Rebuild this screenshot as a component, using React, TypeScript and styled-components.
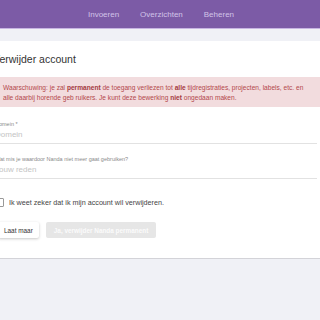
import styled, { createGlobalStyle } from "styled-components";

const Global = createGlobalStyle`
  html, body {
    margin: 0;
    padding: 0;
    background: #f0f1f6;
    font-family: "Liberation Sans", Arial, sans-serif;
    overflow: hidden;
  }
`

const Header = styled.header`
  height: 28px;
  background: #7c5ba6;
  border-bottom: 1px solid #c7b5e2;
  display: flex;
  align-items: center;
  justify-content: center;
  gap: 21px;
  padding-left: 2px;
`

const NavItem = styled.a`
  color: #d2c3e8;
  font-size: 8px;
  text-decoration: none;
`

const Card = styled.main`
  margin-top: 12px;
  background: #fff;
  border-bottom: 1px solid #d3d3d8;
  padding: 11px 0 20px;
`

const Content = styled.div`
  margin-left: -7px;
  display: flex;
  flex-direction: column;
`

const Title = styled.h1`
  margin: 0 0 11px;
  font-size: 10.5px;
  font-weight: 400;
  color: #333;
  line-height: 14px;
`

const Alert = styled.div`
  background: #f2dcde;
  color: #b2484c;
  font-size: 6.6px;
  line-height: 9.5px;
  padding: 6px 14px 5px 10px;
  width: 306px;

  b {
    font-weight: 700;
    color: #a43a3e;
  }
`

const Field = styled.div<{ $first?: boolean }>`
  display: flex;
  flex-direction: column;
  margin-left: 2px;
  width: 322px;
  border-bottom: 1px solid #e2e2e2;
  margin-top: ${({ $first }) => ($first ? "13px" : "11px")};
`

const Label = styled.label`
  font-size: 5.5px;
  color: #8a8a8a;
  line-height: 8px;
`

const Input = styled.input`
  border: none;
  outline: none;
  padding: 0 0 2px;
  font-family: inherit;
  font-size: 8px;
  line-height: 12px;
  height: 15px;
  box-sizing: border-box;
  color: #444;
  background: transparent;
  &::placeholder {
    color: #c4c4c4;
  }
`

const CheckRow = styled.label`
  display: flex;
  align-items: center;
  gap: 5px;
  height: 9px;
  margin-top: 19px;
  margin-left: 3px;
  font-size: 7.2px;
  color: #444;
`

const Box = styled.span`
  width: 6px;
  height: 7px;
  border: 1px solid #999;
  border-radius: 1px;
  background: #fff;
`

const Actions = styled.div`
  display: flex;
  gap: 7px;
  margin-top: 15px;
  margin-left: 5px;
`

const Button = styled.button<{ $primary?: boolean }>`
  height: 16px;
  padding: 0 ${({ $primary }) => ($primary ? "8px" : "6px")};
  border: none;
  border-radius: 2px;
  font-family: inherit;
  font-size: 6.4px;
  font-weight: ${({ $primary }) => ($primary ? 700 : 400)};
  color: ${({ $primary }) => ($primary ? "#fbfbfb" : "#333")};
  background: ${({ $primary }) => ($primary ? "#e6e6e6" : "#fff")};
  box-shadow: ${({ $primary }) => ($primary ? "none" : "0 1px 3px rgba(0,0,0,0.22)")};
`

export default function App() {
  return (
    <>
      <Global />
      <Header>
        <NavItem>Invoeren</NavItem>
        <NavItem>Overzichten</NavItem>
        <NavItem>Beheren</NavItem>
      </Header>
      <Card>
        <Content>
          <Title>Verwijder account</Title>
          <Alert>
            Waarschuwing: je zal <b>permanent</b> de toegang verliezen tot <b>alle</b> tijdregistraties,
            projecten, labels, etc. en alle daarbij horende geb ruikers. Je kunt deze bewerking{" "}
            <b>niet</b> ongedaan maken.
          </Alert>
          <Field $first>
            <Label>Domein *</Label>
            <Input placeholder="Domein" />
          </Field>
          <Field>
            <Label>Wat mis je waardoor Nanda niet meer gaat gebruiken?</Label>
            <Input placeholder="Jouw reden" />
          </Field>
          <CheckRow>
            <Box />
            Ik weet zeker dat ik mijn account wil verwijderen.
          </CheckRow>
          <Actions>
            <Button>Laat maar</Button>
            <Button $primary disabled>Ja, verwijder Nanda permanent</Button>
          </Actions>
        </Content>
      </Card>
    </>
  )
}
